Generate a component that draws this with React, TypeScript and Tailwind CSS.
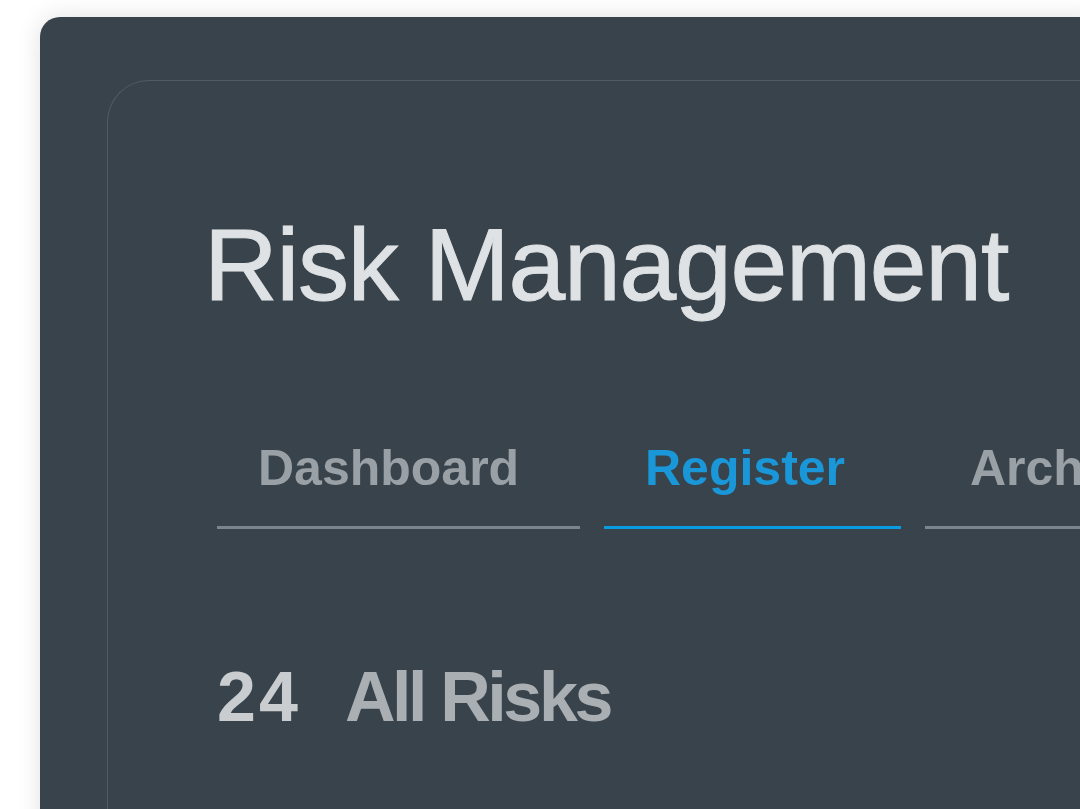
import React from "react";

export default function App() {
  const font = { fontFamily: '"Liberation Sans", Arial, sans-serif' };
  return (
    <div className="w-[1080px] h-[809px] bg-white overflow-hidden" style={font}>
      <div className="ml-[40px] mt-[17px] w-[1060px] h-[820px] bg-[#38434b] rounded-tl-[20px] shadow-[0_0_24px_rgba(0,0,0,0.12)] pt-[63px] pl-[67px]">
        <div className="w-[1000px] h-[800px] border-t border-l border-[#505c64] rounded-tl-[42px] pl-[96px] pt-[133px]">
          <h1 className="text-[102px] leading-none font-normal tracking-[-1.2px] text-[#dfe2e4] whitespace-nowrap [-webkit-text-stroke:1px_#dfe2e4]">
            Risk Management
          </h1>
          <div className="flex gap-[24px] mt-[127px] ml-[13px]">
            <div className="w-[363px] shrink-0 pl-[41px] border-b-[3px] border-[#7c858b] pb-[33px]">
              <span className="block text-[50px] leading-none font-bold tracking-[0px] text-[#9aa1a6] whitespace-nowrap">
                Dashboard
              </span>
            </div>
            <div className="w-[297px] shrink-0 pl-[41px] border-b-[3px] border-[#0a9be0] pb-[33px]">
              <span className="block text-[50px] leading-none font-bold tracking-[0px] text-[#1a97d8] whitespace-nowrap">
                Register
              </span>
            </div>
            <div className="w-[300px] shrink-0 pl-[45px] border-b-[3px] border-[#7c858b] pb-[33px]">
              <span className="block text-[50px] leading-none font-bold tracking-[0px] text-[#9aa1a6] whitespace-nowrap">
                Archive
              </span>
            </div>
          </div>
          <div className="flex items-baseline mt-[133px] ml-[13px] text-[70px] leading-none font-bold whitespace-nowrap">
            <span className="text-[#c9cdd0] tracking-[3px]">24</span>
            <span className="ml-[44px] tracking-[-3.4px] text-[#a9afb3]">All Risks</span>
          </div>
        </div>
      </div>
    </div>
  );
}
